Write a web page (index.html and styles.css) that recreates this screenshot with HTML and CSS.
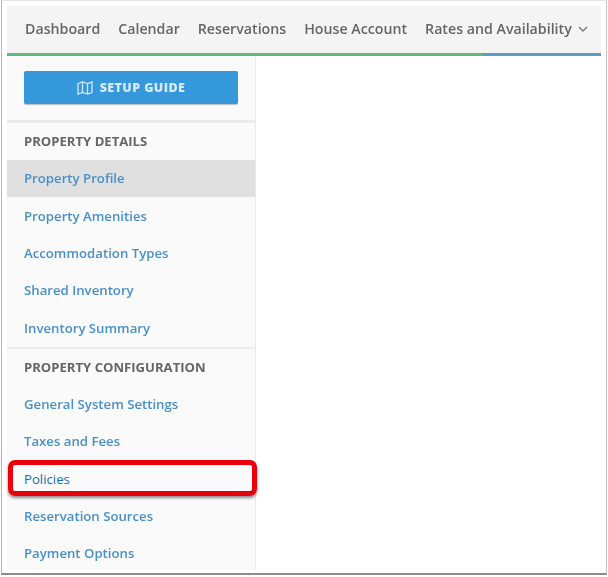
FILE: index.html
```html
<!DOCTYPE html>
<html lang="en">
<head>
<meta charset="utf-8">
<title>Policies</title>
<link rel="stylesheet" href="styles.css">
</head>
<body>
<div class="frame">
  <div class="page">
    <div class="blurred">
      <nav class="topnav">
        <a>Dashboard</a>
        <a>Calendar</a>
        <a>Reservations</a>
        <a>House Account</a>
        <a class="dropdown">Rates and Availability
          <svg class="chevron" width="10" height="6" viewBox="0 0 10 6"><path d="M1 1l4 4 4-4" fill="none" stroke="#777" stroke-width="1.4"/></svg>
        </a>
      </nav>
      <div class="rule"><div class="rule-green"></div><div class="rule-blue"></div></div>
    </div>
    <aside class="sidebar">
      <div class="guide blurred">
        <div class="guide-btn">
          <svg class="map" width="16" height="14" viewBox="0 0 16 14"><path d="M1 2.5l4.5-1.500 5 1.500 4.500-1.500v10.500l-4.500 1.500-5-1.500-4.500 1.500zM5.500 1v10.500M10.500 2.500v10.500" fill="none" stroke="#d5e8f8" stroke-width="1.300"/></svg>
          <span>SETUP GUIDE</span>
        </div>
      </div>
      <section class="group">
        <h3 class="heading blurred">PROPERTY DETAILS</h3>
        <a class="item active blurred">Property Profile</a>
        <a class="item blurred">Property Amenities</a>
        <a class="item blurred">Accommodation Types</a>
        <a class="item blurred">Shared Inventory</a>
        <a class="item blurred">Inventory Summary</a>
      </section>
      <section class="group">
        <h3 class="heading blurred">PROPERTY CONFIGURATION</h3>
        <a class="item blurred">General System Settings</a>
        <a class="item blurred">Taxes and Fees</a>
        <a class="item focus">Policies<span class="callout"></span></a>
        <a class="item blurred">Reservation Sources</a>
        <a class="item blurred">Payment Options</a>
      </section>
    </aside>
  </div>
</div>
</body>
</html>
```
FILE: styles.css
```css
* { box-sizing: border-box; }
html, body { margin: 0; padding: 0; background: #fff; }
body { font-family: "Open Sans", "Liberation Sans", sans-serif; }

.frame {
  width: 606px;
  height: 575px;
  margin-left: 1px;
  padding: 5px 5px 0 5px;
  background: #fff;
  border-left: 1px solid #b5b5b5;
  border-right: 1px solid #c4c4c4;
  border-top: 1px solid #e6e6e6;
  border-bottom: 2px solid #8c8c8c;
  overflow: hidden;
}
.page { width: 594px; height: 563px; }
.blurred { filter: blur(0.7px); }

.topnav {
  height: 47px;
  background: #f4f4f4;
  display: flex;
  align-items: center;
  gap: 18px;
  padding: 0 0 2px 18px;
  font-size: 14.200px;
  font-weight: 600;
  color: #666;
  white-space: nowrap;
}
.dropdown { display: flex; align-items: center; gap: 6px; }
.chevron { margin-top: 1px; }

.rule { display: flex; height: 3px; }
.rule-green { width: 476px; background: #5fba7d; }
.rule-blue { flex: 1; background: #5b9cc4; }

.sidebar {
  width: 249px;
  height: 514px;
  background: #fafafa;
  border-right: 1px solid #eaeaea;
}
.guide {
  height: 64px;
  padding: 15px 17px 0;
}
.guide-btn {
  height: 33px;
  width: 214px;
  background: #3498db;
  border-radius: 2px;
  box-shadow: 0 1px 1px rgba(0, 0, 0, .25);
  display: flex;
  align-items: center;
  justify-content: center;
  gap: 7px;
  color: #d5e8f8;
  font-size: 12.500px;
  font-weight: 800;
  letter-spacing: .4px;
}
.group { border-top: 3px solid #ececec; }
.group + .group { border-top-width: 2px; }

.heading {
  margin: 0;
  height: 36.600px;
  padding-left: 17px;
  display: flex;
  align-items: center;
  font-size: 13.100px;
  font-weight: 700;
  color: #666;
}
.item {
  display: flex;
  align-items: center;
  height: 37.400px;
  padding-left: 17px;
  font-size: 13.200px;
  font-weight: 600;
  color: #4a90c8;
  white-space: nowrap;
}
.active { background: #e0e0e0; }
.focus { position: relative; color: #1b6cb5; font-weight: 400; }

.callout {
  position: absolute;
  left: 1px;
  top: 0;
  width: 249px;
  height: 36px;
  border: 5px solid #e8000b;
  border-radius: 7px;
  box-shadow: 0 2px 3px rgba(0, 0, 0, .45);
}
```
